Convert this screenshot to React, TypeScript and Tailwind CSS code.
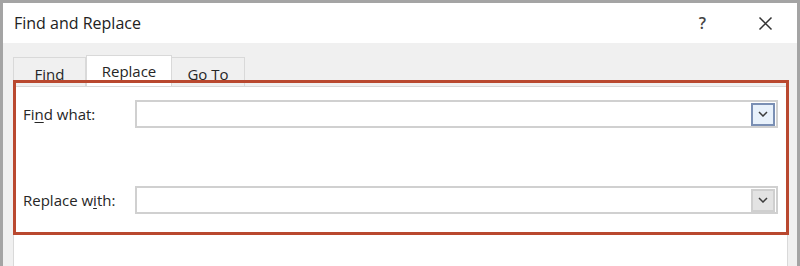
import React from 'react';

const font = { fontFamily: '"Open Sans", "Noto Sans", sans-serif' };

const Chevron: React.FC = () => (
  <svg width="10" height="6" viewBox="0 0 10 6" fill="none">
    <path d="M1 1l4 4 4-4" stroke="#3c3c3c" strokeWidth="1.5" />
  </svg>
);

const ComboRow: React.FC<{ label: React.ReactNode; active?: boolean }> = ({ label, active }) => (
  <div className="flex items-center h-[28px]">
    <div className="w-[119px] pl-[7px] text-[15px] text-[#262626]">{label}</div>
    <div className="flex-1 h-[28px] border-2 border-[#d0d0d0] bg-white flex items-center justify-end pr-[1px]">
      <div
        className={
          active
            ? 'w-[24px] h-[23px] border-2 border-[#7a8fb4] bg-[#e8f1fb] flex items-center justify-center'
            : 'w-[24px] h-[23px] border-2 border-[#cfcfcf] bg-[#e3e3e3] flex items-center justify-center'
        }
      >
        <Chevron />
      </div>
    </div>
  </div>
);

export default function App() {
  return (
    <div
      className="w-[800px] h-[266px] flex flex-col bg-[#f0f0f0] border-t-[3px] border-l-[3px] border-r-[3px] border-[#a4a4a4] overflow-hidden"
      style={font}
    >
      <div className="h-[40px] bg-white flex items-center pl-[11px] pr-[20px] shrink-0">
        <span className="text-[16px] text-[#222]">Find and Replace</span>
        <span className="ml-auto text-[16px] font-semibold text-[#444] mr-[52px]">?</span>
        <svg width="15" height="15" viewBox="0 0 15 15" className="mr-[4px]">
          <path d="M1.5 1.5l12 12M13.5 1.5l-12 12" stroke="#333" strokeWidth="1.5" />
        </svg>
      </div>

      <div className="flex-1 flex flex-col pl-[10px] pr-[9px] pt-[12px]">
        <div className="flex items-end h-[31px] text-[15px] text-[#262626]">
          <div className="w-[73px] h-[29px] border border-b-0 border-[#d9d9d9] bg-[#f0f0f0] flex items-center justify-center pt-[4px]">
            Find
          </div>
          <div className="w-[86px] h-[31px] border border-b-0 border-[#d9d9d9] bg-white flex items-center justify-center">
            Replace
          </div>
          <div className="w-[73px] h-[29px] border border-b-0 border-l-0 border-[#d9d9d9] bg-[#f0f0f0] flex items-center justify-center pt-[4px]">
            Go To
          </div>
        </div>

        <div className="flex-1 bg-white border border-[#d9d9d9] border-b-0">
          <div className="relative z-10 -mt-[7px] -ml-px mr-[-2px] border-[3px] border-[#b9482f] pt-[17px] pb-[18px] pr-[8px] flex flex-col gap-[58px]">
            <ComboRow
              active
              label={
                <>
                  Fi<span className="underline underline-offset-2">n</span>d what:
                </>
              }
            />
            <ComboRow
              label={
                <>
                  Replace w<span className="underline underline-offset-2">i</span>th:
                </>
              }
            />
          </div>
        </div>
      </div>
    </div>
  );
}
